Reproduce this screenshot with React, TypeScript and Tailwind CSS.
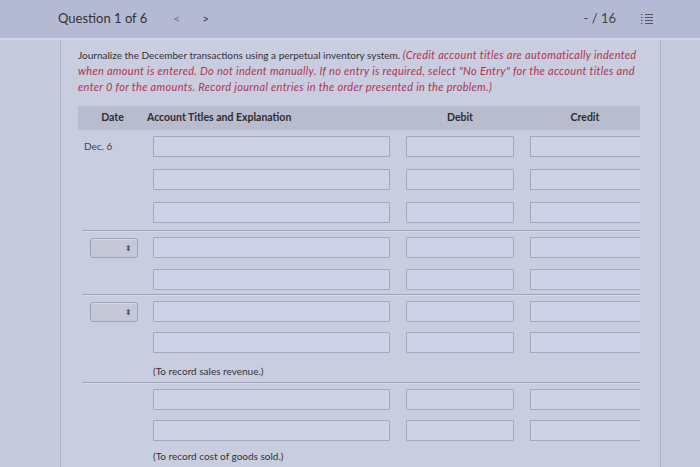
import React from 'react';

const font = { fontFamily: 'Lato, "Open Sans", sans-serif' };

function Field({ w, open }: { w: string; open?: boolean }) {
  return <div className={`h-[21px] ${w} border border-[#a3a8bd] bg-[#cdd2e6] ${open ? 'border-r-0' : 'rounded-[1px]'}`} />;
}

function DateSelect() {
  return (
    <div className="ml-[12px] flex h-[20px] w-[48px] items-center justify-end rounded-[3px] border border-[#9da2b6] bg-[#c4c8d8] pr-[5px] shadow-[inset_0_1px_1px_rgba(255,255,255,0.4)]">
      <span className="text-[8px] leading-none text-[#555]">⬍</span>
    </div>
  );
}

function Row({ date, select }: { date?: string; select?: boolean }) {
  return (
    <div className="flex items-center">
      <div className="w-[75px] text-[10px] text-[#444]">
        {select ? <DateSelect /> : date ? <span className="pl-[6px]">{date}</span> : null}
      </div>
      <Field w="w-[237px]" />
      <div className="w-[16px]" />
      <Field w="w-[108px]" />
      <div className="w-[16px]" />
      <Field w="w-[110px]" open />
    </div>
  );
}

function Note({ text }: { text: string }) {
  return <p className="pl-[75px] text-[10px] leading-[12px] text-[#333]">{text}</p>;
}

function Separator() {
  return <div className="ml-[4px] h-[2px] border-t border-[#9ea3b8] bg-[#d6daea]" />;
}

export default function App() {
  return (
    <div className="h-[467px] w-[700px] overflow-hidden bg-[#c6cadd]" style={font}>
      <header className="flex h-[40px] items-center border-b-2 border-[#d0d4e4] bg-[#b4bad3] pl-[58px] pr-[46px]">
        <span className="text-[13px] text-[#333]">Question 1 of 6</span>
        <span className="ml-[26px] text-[12px] text-[#777]">&lt;</span>
        <span className="ml-[22px] text-[12px] text-[#444]">&gt;</span>
        <span className="ml-auto text-[13px] text-[#444]">- / 16</span>
        <svg className="ml-[24px]" width="14" height="13" viewBox="0 0 14 13" fill="none" stroke="#555" strokeWidth="1.2">
          <path d="M1 1.5h1.5M5 1.5h8M1 4.5h1.5M5 4.5h8M1 7.5h1.5M5 7.5h8M1 10.5h1.5M5 10.5h8" />
        </svg>
      </header>

      <main className="ml-[60px] h-[427px] w-[601px] border-x border-[#aeb3c7] bg-[#c9cde0] pl-[17px] pr-[20px]">
        <p className="pt-[7px] text-[10px] leading-[16px] text-[#333]">
          Journalize the December transactions using a perpetual inventory system.{' '}
          <em className="text-[11px] tracking-[0.3px] text-[#b23350]">
            (Credit account titles are automatically indented when amount is entered. Do not indent manually. If no entry is required, select "No Entry" for the account titles and enter 0 for the amounts. Record journal entries in the order presented in the problem.)
          </em>
        </p>

        <div className="mt-[11px] w-[562px]">
          <div className="flex h-[24px] items-center bg-[#b8bccd] text-[10.5px] font-bold text-[#2d2d2d]">
            <div className="w-[69px] text-center">Date</div>
            <div className="w-[243px]">Account Titles and Explanation</div>
            <div className="w-[140px] text-center">Debit</div>
            <div className="w-[110px] text-center">Credit</div>
          </div>

          <div className="flex flex-col gap-[12px] pt-[6px] pb-[7px]">
            <Row date="Dec. 6" />
            <Row />
            <Row />
          </div>
          <Separator />
          <div className="flex flex-col gap-[11px] pt-[5px] pb-[4px]">
            <Row select />
            <Row />
          </div>
          <Separator />
          <div className="flex flex-col gap-[10px] pt-[5px]">
            <Row select />
            <Row />
          </div>
          <div className="pt-[12px] pb-[5px]">
            <Note text="(To record sales revenue.)" />
          </div>
          <Separator />
          <div className="flex flex-col gap-[10px] pt-[5px]">
            <Row />
            <Row />
          </div>
          <div className="pt-[9px]">
            <Note text="(To record cost of goods sold.)" />
          </div>
        </div>
      </main>
    </div>
  );
}
